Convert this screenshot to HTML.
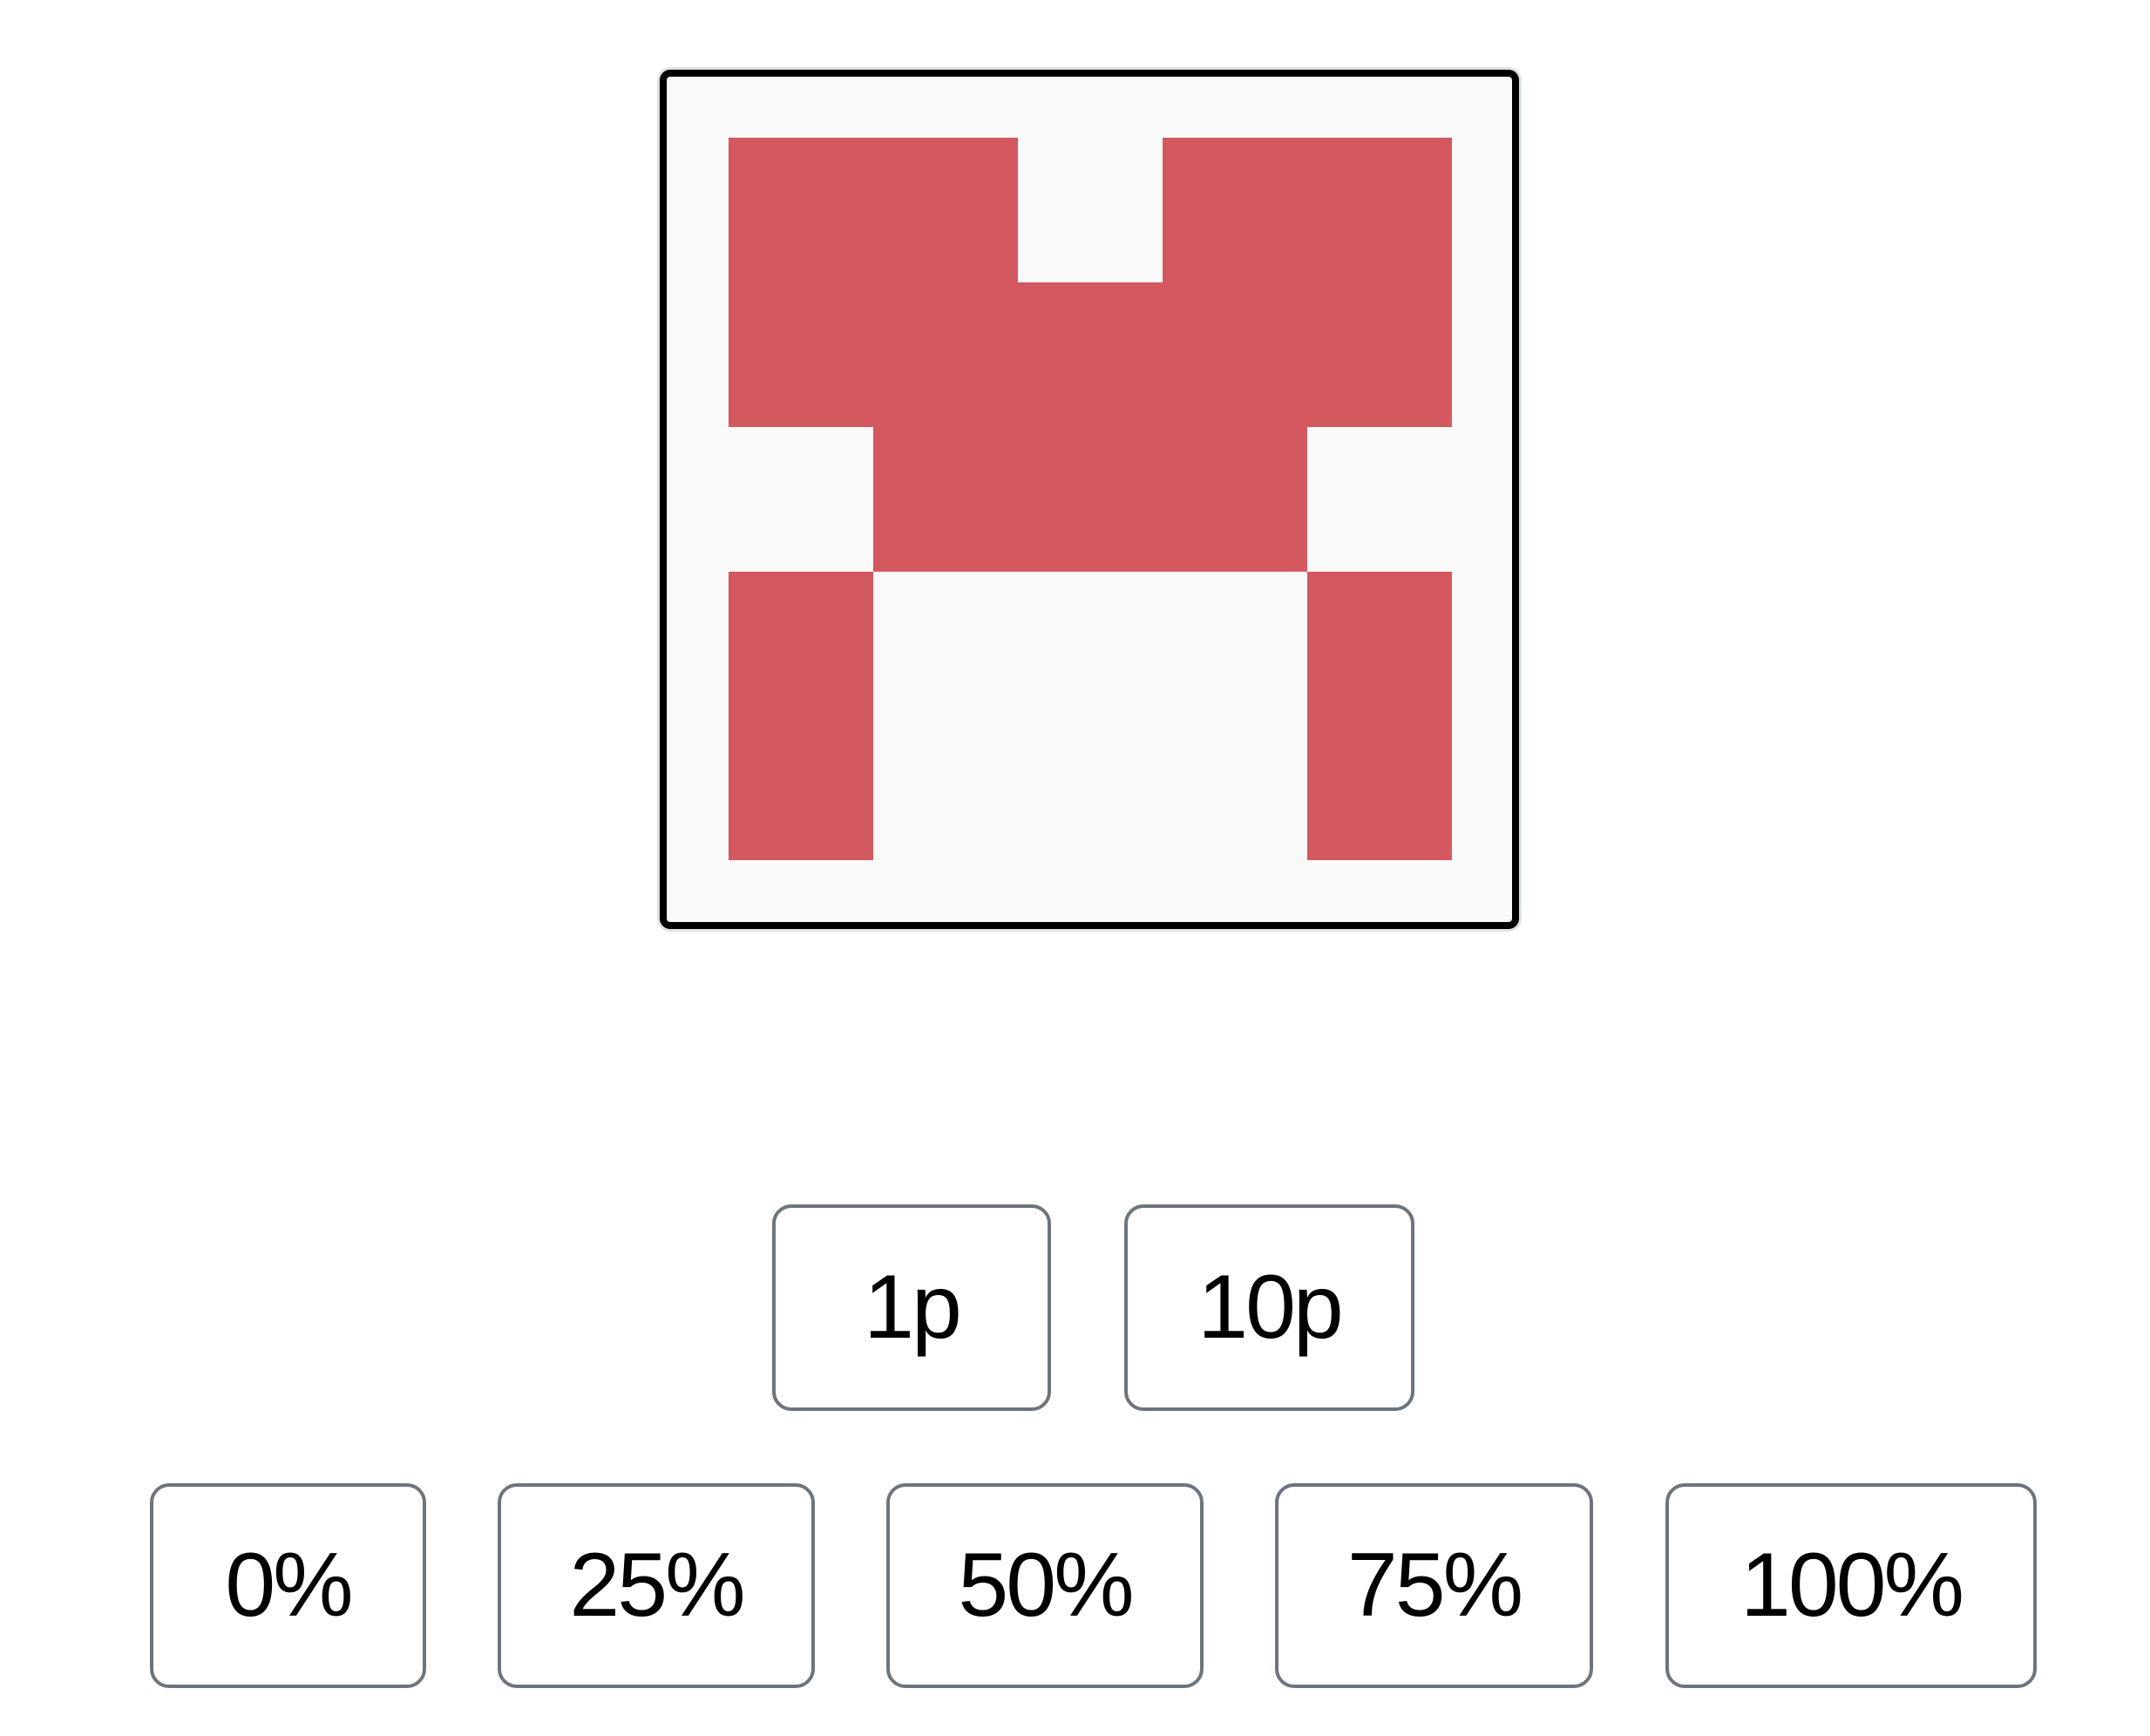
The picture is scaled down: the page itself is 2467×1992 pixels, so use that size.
<!DOCTYPE html>
<html><head><meta charset="utf-8"><style>
html,body{margin:0;padding:0;background:#fff;width:2467px;height:1992px;overflow:hidden}
.box{position:absolute;left:757px;top:80px;width:970px;height:970px;border:8px solid #000;border-radius:12px;background:#f9f9f9;box-shadow:0 0 0 3px #dee2e6}
.c{position:absolute;background:#d45860;width:166px;height:166px}
.b{position:absolute;box-sizing:border-box;border:4px solid #6c757d;border-radius:22px;background:#fff;display:flex;align-items:center;justify-content:center;font-family:"Liberation Sans",Arial,sans-serif;font-size:104px;letter-spacing:-3px;color:#000}
</style></head><body>
<div class="box"></div>
<div class="c" style="left:836px;top:158px;width:332px"></div>
<div class="c" style="left:1334px;top:158px;width:332px"></div>
<div class="c" style="left:836px;top:324px;width:830px"></div>
<div class="c" style="left:1002px;top:490px;width:498px"></div>
<div class="c" style="left:836px;top:656px;height:331px"></div>
<div class="c" style="left:1500px;top:656px;height:331px"></div>

<div class="b" style="left:886px;top:1382px;width:320px;height:237px">1p</div>
<div class="b" style="left:1290px;top:1382px;width:333px;height:237px">10p</div>

<div class="b" style="left:172px;top:1702px;width:317px;height:235px">0%</div>
<div class="b" style="left:571px;top:1702px;width:364px;height:235px">25%</div>
<div class="b" style="left:1017px;top:1702px;width:364px;height:235px">50%</div>
<div class="b" style="left:1463px;top:1702px;width:365px;height:235px">75%</div>
<div class="b" style="left:1911px;top:1702px;width:426px;height:235px">100%</div>
</body></html>
